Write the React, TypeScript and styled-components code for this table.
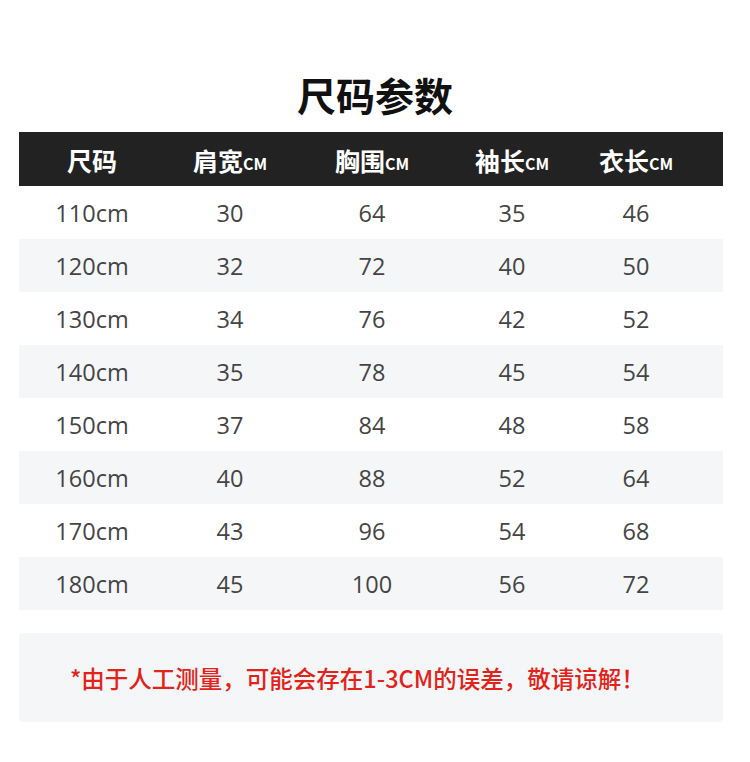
import styled, { createGlobalStyle } from 'styled-components'

const GlobalStyle = createGlobalStyle`
  body {
    margin: 0;
    background: #fff;
    font-family: "Open Sans", "Noto Sans CJK SC", sans-serif;
  }
`

const columns = [
  { name: '尺码', unit: '' },
  { name: '肩宽', unit: 'CM' },
  { name: '胸围', unit: 'CM' },
  { name: '袖长', unit: 'CM' },
  { name: '衣长', unit: 'CM' },
]

const rows = [
  ['110cm', '30', '64', '35', '46'],
  ['120cm', '32', '72', '40', '50'],
  ['130cm', '34', '76', '42', '52'],
  ['140cm', '35', '78', '45', '54'],
  ['150cm', '37', '84', '48', '58'],
  ['160cm', '40', '88', '52', '64'],
  ['170cm', '43', '96', '54', '68'],
  ['180cm', '45', '100', '56', '72'],
]

export default function App() {
  return (
    <Page>
      <GlobalStyle />
      <Title>尺码参数</Title>
      <Table>
        <HeadRow>
          {columns.map((c) => (
            <HeadCell key={c.name}>
              {c.name}
              {c.unit && <Unit>{c.unit}</Unit>}
            </HeadCell>
          ))}
        </HeadRow>
        {rows.map((r, i) => (
          <Row key={r[0]} $striped={i % 2 === 1}>
            {r.map((v, j) => (
              <Cell key={j}>{v}</Cell>
            ))}
          </Row>
        ))}
      </Table>
      <Note>*由于人工测量，可能会存在1-3CM的误差，敬请谅解！</Note>
    </Page>
  )
}

const Page = styled.div`
  width: 750px;
  height: 762px;
  padding: 55px 27px 0 19px;
  box-sizing: border-box;
  display: flex;
  flex-direction: column;
`

const Title = styled.h1`
  margin: 0;
  height: 77px;
  display: flex;
  align-items: center;
  justify-content: center;
  padding-left: 8px;
  font-family: "Noto Sans CJK SC", sans-serif;
  font-size: 39px;
  font-weight: 600;
  color: #111;
`

const Table = styled.div`
  display: flex;
  flex-direction: column;
`

const gridCols = `146px 130px 154px 126px 122px 1fr`

const HeadRow = styled.div`
  display: grid;
  grid-template-columns: ${gridCols};
  height: 54px;
  background: #222222;
`

const HeadCell = styled.div`
  display: flex;
  align-items: center;
  justify-content: center;
  font-family: "Noto Sans CJK SC", sans-serif;
  font-size: 25px;
  font-weight: 600;
  color: #fff;
  padding-top: 1px;
`

const Unit = styled.span`
  font-size: 16px;
  font-weight: 600;
  margin-top: 7px;
`

const Row = styled.div<{ $striped: boolean }>`
  display: grid;
  grid-template-columns: ${gridCols};
  height: 53px;
  background: ${(p) => (p.$striped ? '#f5f6f8' : '#fff')};
`

const Cell = styled.div`
  display: flex;
  align-items: center;
  justify-content: center;
  font-size: 23.5px;
  color: #444;
`

const Note = styled.div`
  margin-top: 23px;
  height: 89px;
  background: #f5f6f8;
  border-radius: 4px;
  display: flex;
  align-items: center;
  padding-left: 51px;
  font-family: "Noto Sans CJK SC", sans-serif;
  font-size: 23.5px;
  font-weight: 500;
  color: #e2231a;
`
